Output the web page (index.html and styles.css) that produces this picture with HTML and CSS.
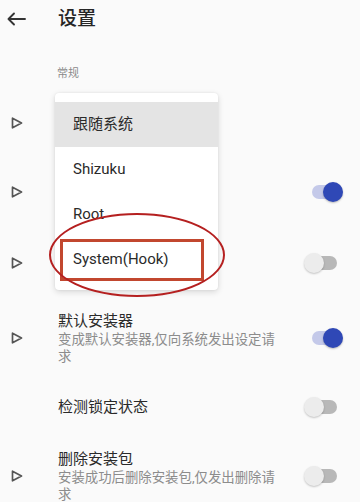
FILE: index.html
```html
<!DOCTYPE html>
<html lang="zh-CN">
<head>
<meta charset="utf-8">
<title>设置</title>
<link rel="stylesheet" href="styles.css">
</head>
<body>
<div class="page">
  <header class="topbar">
    <div class="lead">
      <svg class="back" width="20" height="14" viewBox="0 0 20 14"><path d="M1.5 7H18M7 1.5L1.5 7 7 12.5" fill="none" stroke="#333" stroke-width="1.9" stroke-linecap="round" stroke-linejoin="round"/></svg>
    </div>
    <h1 class="title">设置</h1>
  </header>

  <div class="section">常规</div>

  <div class="row row--h68">
    <div class="lead"><svg class="tri" width="12" height="12" viewBox="0 0 12 12"><path d="M1.5 1.2L10.5 6 1.5 10.8Z" fill="none" stroke="#555" stroke-width="1.7" stroke-linejoin="round"/></svg></div>
    <div class="texts"></div>
    <div class="sw-slot"></div>
  </div>

  <div class="row row--h69">
    <div class="lead"><svg class="tri" width="12" height="12" viewBox="0 0 12 12"><path d="M1.5 1.2L10.5 6 1.5 10.8Z" fill="none" stroke="#555" stroke-width="1.7" stroke-linejoin="round"/></svg></div>
    <div class="texts"></div>
    <div class="sw-slot"><span class="sw on"><span class="track"></span><span class="thumb"></span></span></div>
  </div>

  <div class="row row--h74">
    <div class="lead"><svg class="tri" width="12" height="12" viewBox="0 0 12 12"><path d="M1.5 1.2L10.5 6 1.5 10.8Z" fill="none" stroke="#555" stroke-width="1.7" stroke-linejoin="round"/></svg></div>
    <div class="texts"></div>
    <div class="sw-slot"><span class="sw"><span class="track"></span><span class="thumb"></span></span></div>
  </div>

  <div class="row">
    <div class="lead"><svg class="tri" width="12" height="12" viewBox="0 0 12 12"><path d="M1.5 1.2L10.5 6 1.5 10.8Z" fill="none" stroke="#555" stroke-width="1.7" stroke-linejoin="round"/></svg></div>
    <div class="texts"><div class="t">默认安装器</div><div class="s">变成默认安装器,仅向系统发出设定请求</div></div>
    <div class="sw-slot"><span class="sw on"><span class="track"></span><span class="thumb"></span></span></div>
  </div>

  <div class="row row--h62">
    <div class="lead"></div>
    <div class="texts"><div class="t">检测锁定状态</div></div>
    <div class="sw-slot"><span class="sw"><span class="track"></span><span class="thumb"></span></span></div>
  </div>

  <div class="row">
    <div class="lead"><svg class="tri" width="12" height="12" viewBox="0 0 12 12"><path d="M1.5 1.2L10.5 6 1.5 10.8Z" fill="none" stroke="#555" stroke-width="1.7" stroke-linejoin="round"/></svg></div>
    <div class="texts"><div class="t">删除安装包</div><div class="s">安装成功后删除安装包,仅发出删除请求</div></div>
    <div class="sw-slot"><span class="sw"><span class="track"></span><span class="thumb"></span></span></div>
  </div>

  <div class="menu">
    <div class="item selected">跟随系统</div>
    <div class="item">Shizuku</div>
    <div class="item">Root</div>
    <div class="item">System(Hook)</div>
  </div>

  <div class="mark-rect"></div>
  <div class="mark-ellipse"></div>
</div>
</body>
</html>
```

FILE: styles.css
```css
html, body {
  margin: 0;
  padding: 0;
  background: #fafafa;
}
body {
  font-family: Roboto, "Noto Sans CJK SC", "Noto Sans", sans-serif;
  color: #2a2a2a;
}
.page {
  position: relative;
  width: 360px;
  height: 502px;
  overflow: hidden;
  background: #fafafa;
}
.topbar {
  display: flex;
  align-items: center;
  height: 38px;
}
.lead {
  width: 58px;
  flex: none;
  display: flex;
  align-items: center;
}
.back {
  margin-left: 7px;
  display: block;
}
.title {
  margin: 0;
  font-size: 19px;
  font-weight: 500;
  line-height: 38px;
  color: #262626;
}
.section {
  padding: 28px 0 0 57px;
  height: 23px;
  font-size: 11px;
  line-height: 16px;
  color: #8a8a8a;
}
.row {
  display: flex;
  align-items: center;
  padding: 11px 0;
  box-sizing: border-box;
}
.row--h62 { min-height: 62px; }
.row--h68 { min-height: 68px; }
.row--h69 { min-height: 69px; }
.row--h74 { min-height: 74px; }
.tri {
  display: block;
  margin-left: 11px;
}
.texts {
  flex: none;
  width: 226px;
}
.t {
  font-size: 15px;
  line-height: 20px;
  color: #2a2a2a;
}
.s {
  font-size: 13.4px;
  line-height: 17px;
  color: #8c8c8c;
}
.sw-slot {
  margin-left: auto;
  margin-right: 16px;
  width: 40px;
  height: 20px;
}
.sw {
  position: relative;
  display: block;
  width: 40px;
  height: 20px;
}
.track {
  position: absolute;
  left: 8px;
  top: 3px;
  width: 25px;
  height: 14px;
  border-radius: 7px;
  background: #b8b8b8;
}
.thumb {
  position: absolute;
  left: 0;
  top: 0;
  width: 20px;
  height: 20px;
  border-radius: 50%;
  background: #ececec;
  box-shadow: 0 1px 2px rgba(0,0,0,0.22);
}
.sw.on .track { background: #c4c9e9; }
.sw.on .thumb {
  left: 19px;
  background: #2f48b6;
  box-shadow: 0 1px 2px rgba(0,0,0,0.25);
}
.menu {
  position: absolute;
  left: 55px;
  top: 93px;
  width: 163px;
  padding: 9px 0 8px;
  background: #ffffff;
  border-radius: 4px;
  box-shadow: 0 2px 6px rgba(0,0,0,0.14), 0 0 2px rgba(0,0,0,0.08);
}
.item {
  height: 45px;
  line-height: 45px;
  padding-left: 18px;
  font-size: 15px;
  color: #2a2a2a;
}
.item.selected {
  background: #e4e4e4;
}
.mark-rect {
  position: absolute;
  left: 60px;
  top: 239px;
  width: 138px;
  height: 36px;
  border: 3px solid #c2472f;
}
.mark-ellipse {
  position: absolute;
  left: 49px;
  top: 213px;
  width: 172px;
  height: 80px;
  border: 2.5px solid #b52020;
  border-radius: 50%;
}
```
